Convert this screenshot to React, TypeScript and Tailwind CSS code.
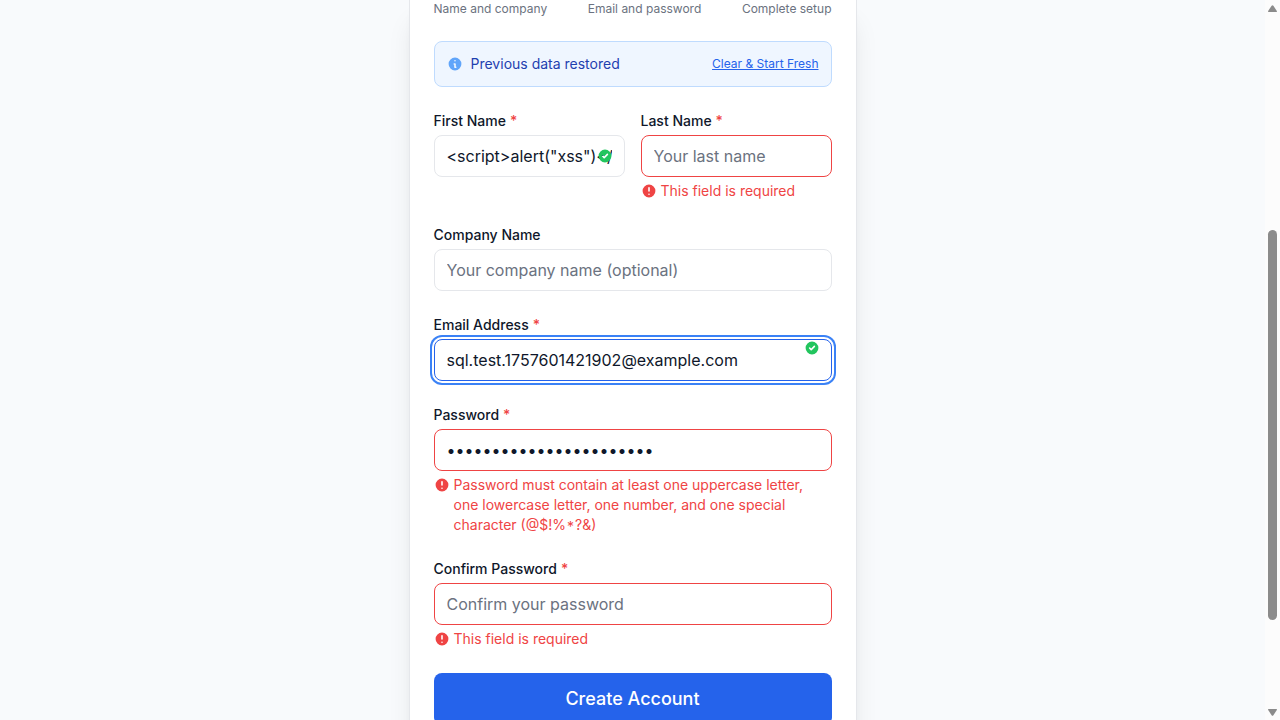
import React from "react";

const CHECK =
  "M10 18a8 8 0 100-16 8 8 0 000 16zm3.707-9.293a1 1 0 00-1.414-1.414L9 10.586 7.707 9.293a1 1 0 00-1.414 1.414l2 2a1 1 0 001.414 0l4-4z";
const ALERT =
  "M18 10a8 8 0 11-16 0 8 8 0 0116 0zm-7 4a1 1 0 11-2 0 1 1 0 012 0zm-1-9a1 1 0 00-1 1v4a1 1 0 102 0V6a1 1 0 00-1-1z";
const INFO =
  "M18 10a8 8 0 11-16 0 8 8 0 0116 0zm-7-4a1 1 0 11-2 0 1 1 0 012 0zM9 9a1 1 0 000 2v3a1 1 0 001 1h1a1 1 0 100-2v-3a1 1 0 00-1-1H9z";

function Icon({ path, className }: { path: string; className: string }) {
  return (
    <svg viewBox="0 0 20 20" fill="currentColor" className={"h-4 w-4 shrink-0 " + className}>
      <path fillRule="evenodd" clipRule="evenodd" d={path} />
    </svg>
  );
}

type FieldProps = {
  label: string;
  required?: boolean;
  type?: string;
  value?: string;
  placeholder?: string;
  error?: React.ReactNode;
  focused?: boolean;
  check?: string;
};

function Field({ label, required, type = "text", value, placeholder, error, focused, check }: FieldProps) {
  const border = error ? "border-[#ef4444]" : focused ? "border-[#2563eb]" : "border-[#e5e7eb]";
  const ring = focused ? "ring-2 ring-[#3b82f6] ring-offset-2 ring-offset-white" : "";
  return (
    <div className="min-w-0">
      <label className="mb-1 block text-sm font-medium text-[#0f172a]">
        {label}
        {required && <span className="ml-1 text-[#ef4444]">*</span>}
      </label>
      <div className="relative">
        <input
          type={type}
          defaultValue={value}
          placeholder={placeholder}
          spellCheck={false}
          className={
            "block h-[42px] w-full rounded-lg border bg-white px-3 py-2 text-base text-[#0f172a] outline-none placeholder:text-[#6b7280] " +
            border +
            " " +
            ring
          }
        />
        {check && <Icon path={CHECK} className={"absolute right-3 text-[#22c55e] " + check} />}
      </div>
      {error && (
        <p className="mt-1 flex items-start gap-1 text-sm text-[#ef4444]">
          <Icon path={ALERT} className="mt-0.5" />
          <span>{error}</span>
        </p>
      )}
    </div>
  );
}

function Scrollbar() {
  return (
    <div className="flex h-full w-[15px] shrink-0 flex-col items-center bg-[#fcfcfc]">
      <svg viewBox="0 0 15 17" className="h-[17px] w-[15px]" fill="#8b8b8b">
        <path d="M3 11.2 6.6 5.8Q7.5 4.6 8.4 5.8L12 11.2Q12 12 11.4 12H3.6Q3 12 3 11.2Z" />
      </svg>
      <div className="mt-[213px] h-[390px] w-[9px] rounded-full bg-[#8b8b8b]" />
      <svg viewBox="0 0 15 17" className="mt-auto h-[17px] w-[15px]" fill="#8b8b8b">
        <path d="M3 6.8 6.6 12.2Q7.5 13.4 8.4 12.2L12 6.8Q12 6 11.4 6H3.6Q3 6 3 6.8Z" />
      </svg>
    </div>
  );
}

export default function App() {
  return (
    <div className="flex h-[720px] w-full overflow-hidden bg-[#f8fafc] font-['Inter',sans-serif]">
      <main className="flex h-full min-w-0 flex-1 justify-center">
        <div className="h-[800px] w-[448px] shrink-0 border-x border-[#e5e7eb] bg-white px-6 pt-px shadow-xl">
          <div className="mb-6 flex justify-between text-xs text-[#6b7280]">
            <span>Name and company</span>
            <span>Email and password</span>
            <span>Complete setup</span>
          </div>
          <div className="mb-6 flex h-[46px] items-center rounded-lg border border-[#bfdbfe] bg-[#eff6ff] px-3">
            <Icon path={INFO} className="mr-2 text-[#60a5fa]" />
            <span className="text-sm text-[#1e40af]">Previous data restored</span>
            <button className="ml-auto text-xs text-[#2563eb] underline">Clear &amp; Start Fresh</button>
          </div>
          <form className="flex flex-col gap-6">
            <div className="grid grid-cols-2 gap-4">
              <Field label="First Name" required value={'<script>alert("xss")</script>'} check="top-[13px]" />
              <Field label="Last Name" required placeholder="Your last name" error="This field is required" />
            </div>
            <Field label="Company Name" placeholder="Your company name (optional)" />
            <Field label="Email Address" required value="sql.test.1757601421902@example.com" focused check="top-px" />
            <Field
              label="Password"
              required
              type="password"
              value="abcdefghijklmnopqrstuvw"
              error={
                <>
                  Password must contain at least one uppercase letter, one lowercase letter, one number, and one special
                  character (@$!%<span className="relative top-[2px] mx-px">*</span>?&amp;)
                </>
              }
            />
            <Field
              label="Confirm Password"
              required
              type="password"
              placeholder="Confirm your password"
              error="This field is required"
            />
            <button type="button" className="h-[52px] w-full rounded-lg bg-[#2563eb] text-lg font-medium text-white">
              Create Account
            </button>
          </form>
        </div>
      </main>
      <Scrollbar />
    </div>
  );
}
